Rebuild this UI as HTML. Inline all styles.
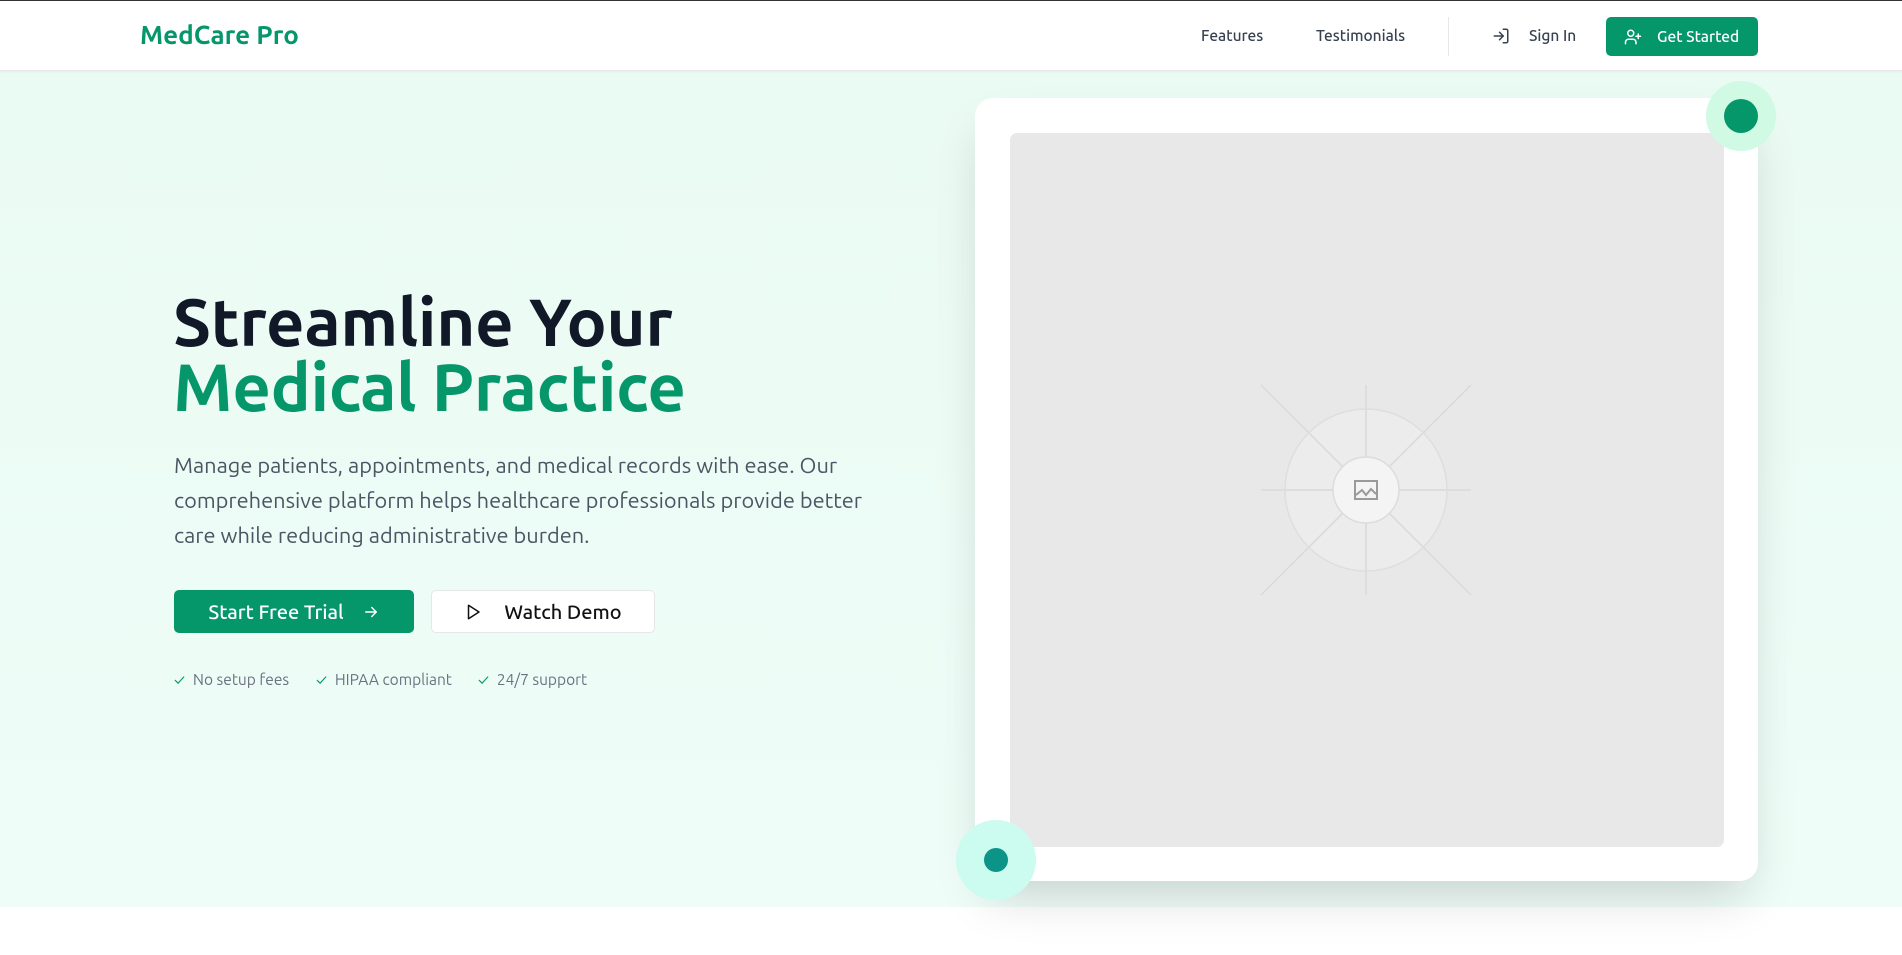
<!DOCTYPE html>
<html><head><meta charset="utf-8"><style>
*{margin:0;padding:0;box-sizing:border-box}
body{width:1902px;height:955px;overflow:hidden;background:#fff;font-family:"Ubuntu","Liberation Sans",sans-serif;position:relative}
.nav{position:absolute;left:0;top:0;width:1902px;height:71px;background:#fff;border-top:1px solid #333;border-bottom:1px solid #e5e7eb;box-shadow:0 1px 3px rgba(0,0,0,.05)}
.abs{position:absolute}
.logo{left:140px;top:20px;font-size:26px;font-weight:bold;color:#059669}
.nl{top:27px;font-size:15.5px;color:#374151;font-weight:500}
.hero{position:absolute;left:0;top:71px;width:1902px;height:836px;background:linear-gradient(180deg,#eafbf3,#effdf8)}
h1{position:absolute;left:173px;top:289px;font-size:67px;line-height:65px;font-weight:bold;color:#111827;letter-spacing:-0.3px}
h1 span{color:#059669}
p.d{position:absolute;left:174px;top:449px;width:700px;font-size:21.8px;line-height:35px;color:#4b5563}
.btn1{left:174px;top:590px;width:240px;height:43px;background:#059669;border-radius:5px;color:#fff;font-size:20px;font-weight:500;display:flex;align-items:center;justify-content:center;gap:18px}
.btn2{left:431px;top:590px;width:224px;height:43px;background:#fff;border:1px solid #e5e7eb;border-radius:5px;color:#111;font-size:20px;font-weight:500;display:flex;align-items:center;justify-content:center;gap:22px}
.chk{top:671px;font-size:15.5px;color:#6b7280;display:flex;gap:8px;align-items:center}
.card{left:975px;top:98px;width:783px;height:783px;background:#fff;border-radius:18px;box-shadow:0 25px 50px -12px rgba(0,0,0,.18)}
.inner{left:1010px;top:133px;width:714px;height:714px;background:#e8e8e8;border-radius:7px}
</style></head><body>
<div class="hero"></div>
<div class="nav"></div>
<div class="abs logo">MedCare Pro</div>
<div class="abs nl" style="left:1201px">Features</div>
<div class="abs nl" style="left:1316px">Testimonials</div>
<div class="abs" style="left:1448px;top:17px;width:1px;height:39px;background:#e5e7eb"></div>
<svg class="abs" style="left:1492px;top:27px" width="18" height="18" viewBox="0 0 24 24" fill="none" stroke="#374151" stroke-width="2" stroke-linecap="round" stroke-linejoin="round"><path d="M15 3h4a2 2 0 0 1 2 2v14a2 2 0 0 1-2 2h-4"/><path d="M10 17l5-5-5-5"/><path d="M15 12H3"/></svg>
<div class="abs nl" style="left:1529px">Sign In</div>
<div class="abs" style="left:1606px;top:17px;width:152px;height:39px;background:#059669;border-radius:5px;color:#fff;font-size:15.5px;font-weight:500;display:flex;align-items:center;padding-left:18px;gap:15px"><svg width="18" height="18" viewBox="0 0 24 24" fill="none" stroke="#fff" stroke-width="2" stroke-linecap="round"><path d="M16 21v-2a4 4 0 0 0-4-4H6a4 4 0 0 0-4 4v2"/><circle cx="9" cy="7" r="4"/><path d="M19 8v6M22 11h-6"/></svg>Get Started</div>

<h1>Streamline Your<br><span>Medical Practice</span></h1>
<p class="d">Manage patients, appointments, and medical records with ease. Our comprehensive platform helps healthcare professionals provide better care while reducing administrative burden.</p>
<div class="abs btn1">Start Free Trial <svg width="18" height="18" viewBox="0 0 24 24" fill="none" stroke="#fff" stroke-width="2" stroke-linecap="round" stroke-linejoin="round"><path d="M5 12h14M13 6l6 6-6 6"/></svg></div>
<div class="abs btn2"><svg width="18" height="18" viewBox="0 0 24 24" fill="none" stroke="#111" stroke-width="2" stroke-linejoin="round"><path d="M6 3l14 9-14 9z"/></svg>Watch Demo</div>
<div class="abs chk" style="left:174px"><span style="color:#059669">✓</span>No setup fees</div>
<div class="abs chk" style="left:316px"><span style="color:#059669">✓</span>HIPAA compliant</div>
<div class="abs chk" style="left:478px"><span style="color:#059669">✓</span>24/7 support</div>

<div class="abs card"></div>
<div class="abs inner"></div>
<svg class="abs" style="left:1256px;top:380px" width="220" height="220" viewBox="0 0 220 220">
<g stroke="#d9d9d9" stroke-width="1.5">
<line x1="110" y1="5" x2="110" y2="215"/><line x1="5" y1="110" x2="215" y2="110"/>
<line x1="5" y1="5" x2="215" y2="215"/><line x1="215" y1="5" x2="5" y2="215"/></g>
<circle cx="110" cy="110" r="81" fill="#eeeeee" fill-opacity=".6" stroke="#dedede" stroke-width="1.5"/>
<g stroke="#d9d9d9" stroke-width="1.5"><line x1="110" y1="29" x2="110" y2="191"/><line x1="29" y1="110" x2="191" y2="110"/><line x1="53" y1="53" x2="167" y2="167"/><line x1="167" y1="53" x2="53" y2="167"/></g>
<circle cx="110" cy="110" r="33" fill="#f4f4f4" stroke="#dcdcdc" stroke-width="1.5"/>
<rect x="99" y="101" width="22" height="18" fill="none" stroke="#9a9a9a" stroke-width="2"/>
<path d="M100 115l6-5 4 5 5-6 5 5" fill="none" stroke="#9a9a9a" stroke-width="2"/>
</svg>
<div class="abs" style="left:1706px;top:81px;width:70px;height:70px;border-radius:50%;background:#d1fae5"></div>
<div class="abs" style="left:1724px;top:99px;width:34px;height:34px;border-radius:50%;background:#059669"></div>
<div class="abs" style="left:956px;top:820px;width:80px;height:80px;border-radius:50%;background:#ccfbef"></div>
<div class="abs" style="left:984px;top:848px;width:24px;height:24px;border-radius:50%;background:#0d9488"></div>
</body></html>
